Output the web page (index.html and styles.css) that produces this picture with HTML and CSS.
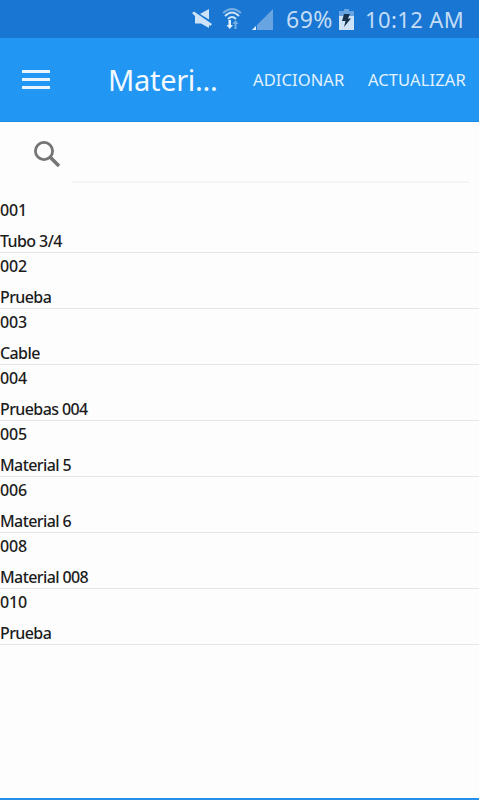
FILE: index.html
```html
<!DOCTYPE html>
<html lang="es">
  <head>
    <meta charset="UTF-8" />
    <meta name="viewport" content="width=device-width, initial-scale=1.0" />
    <title>Materiales</title>
    <link rel="stylesheet" href="styles.css">
  </head>
  <body>
    <div class="statusbar">
      <svg class="mute" width="20" height="20" viewBox="0 0 20 20" fill="#cfe3f8">
        <path d="M8 5L17 0V10.5Z" />
        <path d="M0 4L2 2.5L20 15L18.5 17L17 16V19L9 14.5H3V7Z" />
      </svg>
      <svg class="wifi" width="20" height="24" viewBox="0 0 20 24">
        <g fill="none" stroke-width="2">
          <path d="M1 6Q10-2 19 6" stroke="#75ade5" />
          <path d="M3 9Q10 2 17 9M6 12Q10 8 14 12" stroke="#cfe3f8" />
        </g>
        <path d="M6.5 13H9V18H11L7.7 22L4.5 18H6.5Z" fill="#e2effc" />
        <path d="M12.5 22V17H10.5L13.5 13L16.5 17H14.5V22Z" fill="#75ade5" />
      </svg>
      <svg class="signal" width="21" height="21" viewBox="0 0 21 21">
        <path d="M0 21L21 0V21Z" fill="#68a3e2" />
        <path d="M4 17V21H5V16Z" fill="#1976d2" />
        <path d="M0 21L4 17V21Z" fill="#e2effc" />
      </svg>
      <span class="percent">69%</span>
      <svg class="battery" width="15" height="21" viewBox="0 0 15 21">
        <path d="M5 0H10V2H15V10H0V2H5Z" fill="#68a3e2" />
        <path d="M0 7H15V21H0Z" fill="#cfe3f8" />
        <path d="M5 5H11L9 9.5H12L5 18L6.5 12H3Z" fill="#17324f" />
      </svg>
      <span class="clock">10:12 AM</span>
    </div>
    <div class="toolbar">
      <svg class="menu" width="28" height="22" viewBox="0 0 28 22">
        <path d="M0 2.5H28M0 10.5H28M0 18.5H28" stroke="#e8f5fe" stroke-width="3" />
      </svg>
      <h1>Materi...</h1>
      <button type="button" class="add">ADICIONAR</button>
      <button type="button" class="update">ACTUALIZAR</button>
    </div>
    <div class="search">
      <svg width="27" height="27" viewBox="0 0 27 27" fill="none" stroke="#757575">
        <circle cx="10" cy="10" r="8.6" stroke-width="2.8" />
        <path d="M16 16L25 25" stroke-width="3.6" />
      </svg>
      <input type="text" aria-label="Buscar" />
    </div>
    <ul class="materials">
      <li><span class="code">001</span><span class="name">Tubo 3/4</span></li>
      <li><span class="code">002</span><span class="name">Prueba</span></li>
      <li><span class="code">003</span><span class="name">Cable</span></li>
      <li><span class="code">004</span><span class="name">Pruebas 004</span></li>
      <li><span class="code">005</span><span class="name">Material 5</span></li>
      <li><span class="code">006</span><span class="name">Material 6</span></li>
      <li><span class="code">008</span><span class="name">Material 008</span></li>
      <li><span class="code">010</span><span class="name">Prueba</span></li>
    </ul>
  </body>
</html>
```
FILE: styles.css
```css
* {
  box-sizing: border-box;
}
body {
  display: flex;
  flex-direction: column;
  height: 100vh;
  margin: 0;
  overflow: hidden;
  background-color: #fdfdfd;
  border-bottom: 2px solid #2490ec;
  font-family: "Noto Sans", sans-serif;
}
svg {
  flex: none;
}

/* Status bar */
.statusbar {
  display: flex;
  align-items: center;
  height: 38px;
  padding-left: 192px;
  background-color: #1976d2;
  color: #c4ddf6;
  font-size: 22px;
  white-space: nowrap;
}
.wifi {
  margin-left: 10px;
}
.signal {
  margin-left: 10px;
}
.percent {
  width: 48px;
  margin-left: 13px;
  font-size: 23px;
  letter-spacing: 0.5px;
}
.battery {
  margin-left: 5px;
}
.clock {
  margin-left: 11px;
  letter-spacing: 0.4px;
}

/* Toolbar */
.toolbar {
  display: flex;
  align-items: center;
  height: 84px;
  padding-left: 22px;
  background-color: #2196f3;
  border-bottom: 1px solid #2089df;
  color: #f3f9ff;
}
h1 {
  width: 110px;
  margin: 0 0 0 58px;
  font-size: 29px;
  font-weight: 400;
  letter-spacing: -0.3px;
  white-space: nowrap;
}
button {
  padding: 0;
  border: none;
  background: none;
  color: #e3f2ff;
  font-family: inherit;
  font-size: 16.5px;
  letter-spacing: 0.1px;
  text-align: left;
  white-space: nowrap;
}
.add {
  width: 91px;
  margin-left: 35px;
}
.update {
  width: 99px;
  margin-left: 24px;
}

/* Search */
.search {
  display: flex;
  height: 61px;
  padding-left: 34px;
}
.search svg {
  margin-top: 19px;
}
.search input {
  width: 397px;
  margin-left: 11px;
  padding: 0;
  border: none;
  border-bottom: 2px solid #f4f4f4;
  background: none;
  font-size: 16px;
  outline: none;
}

/* List */
.materials {
  margin: 14px 0 0;
  padding: 0;
  list-style: none;
}
.materials li {
  height: 56px;
  border-bottom: 1px solid #e6e6e6;
  color: #1c1c1c;
  font-size: 16px;
  font-weight: 500;
}
.code,
.name {
  display: block;
}
.code {
  line-height: 26px;
  letter-spacing: -0.2px;
}
.name {
  margin-top: 6px;
  line-height: 25px;
  letter-spacing: -0.6px;
}
```
